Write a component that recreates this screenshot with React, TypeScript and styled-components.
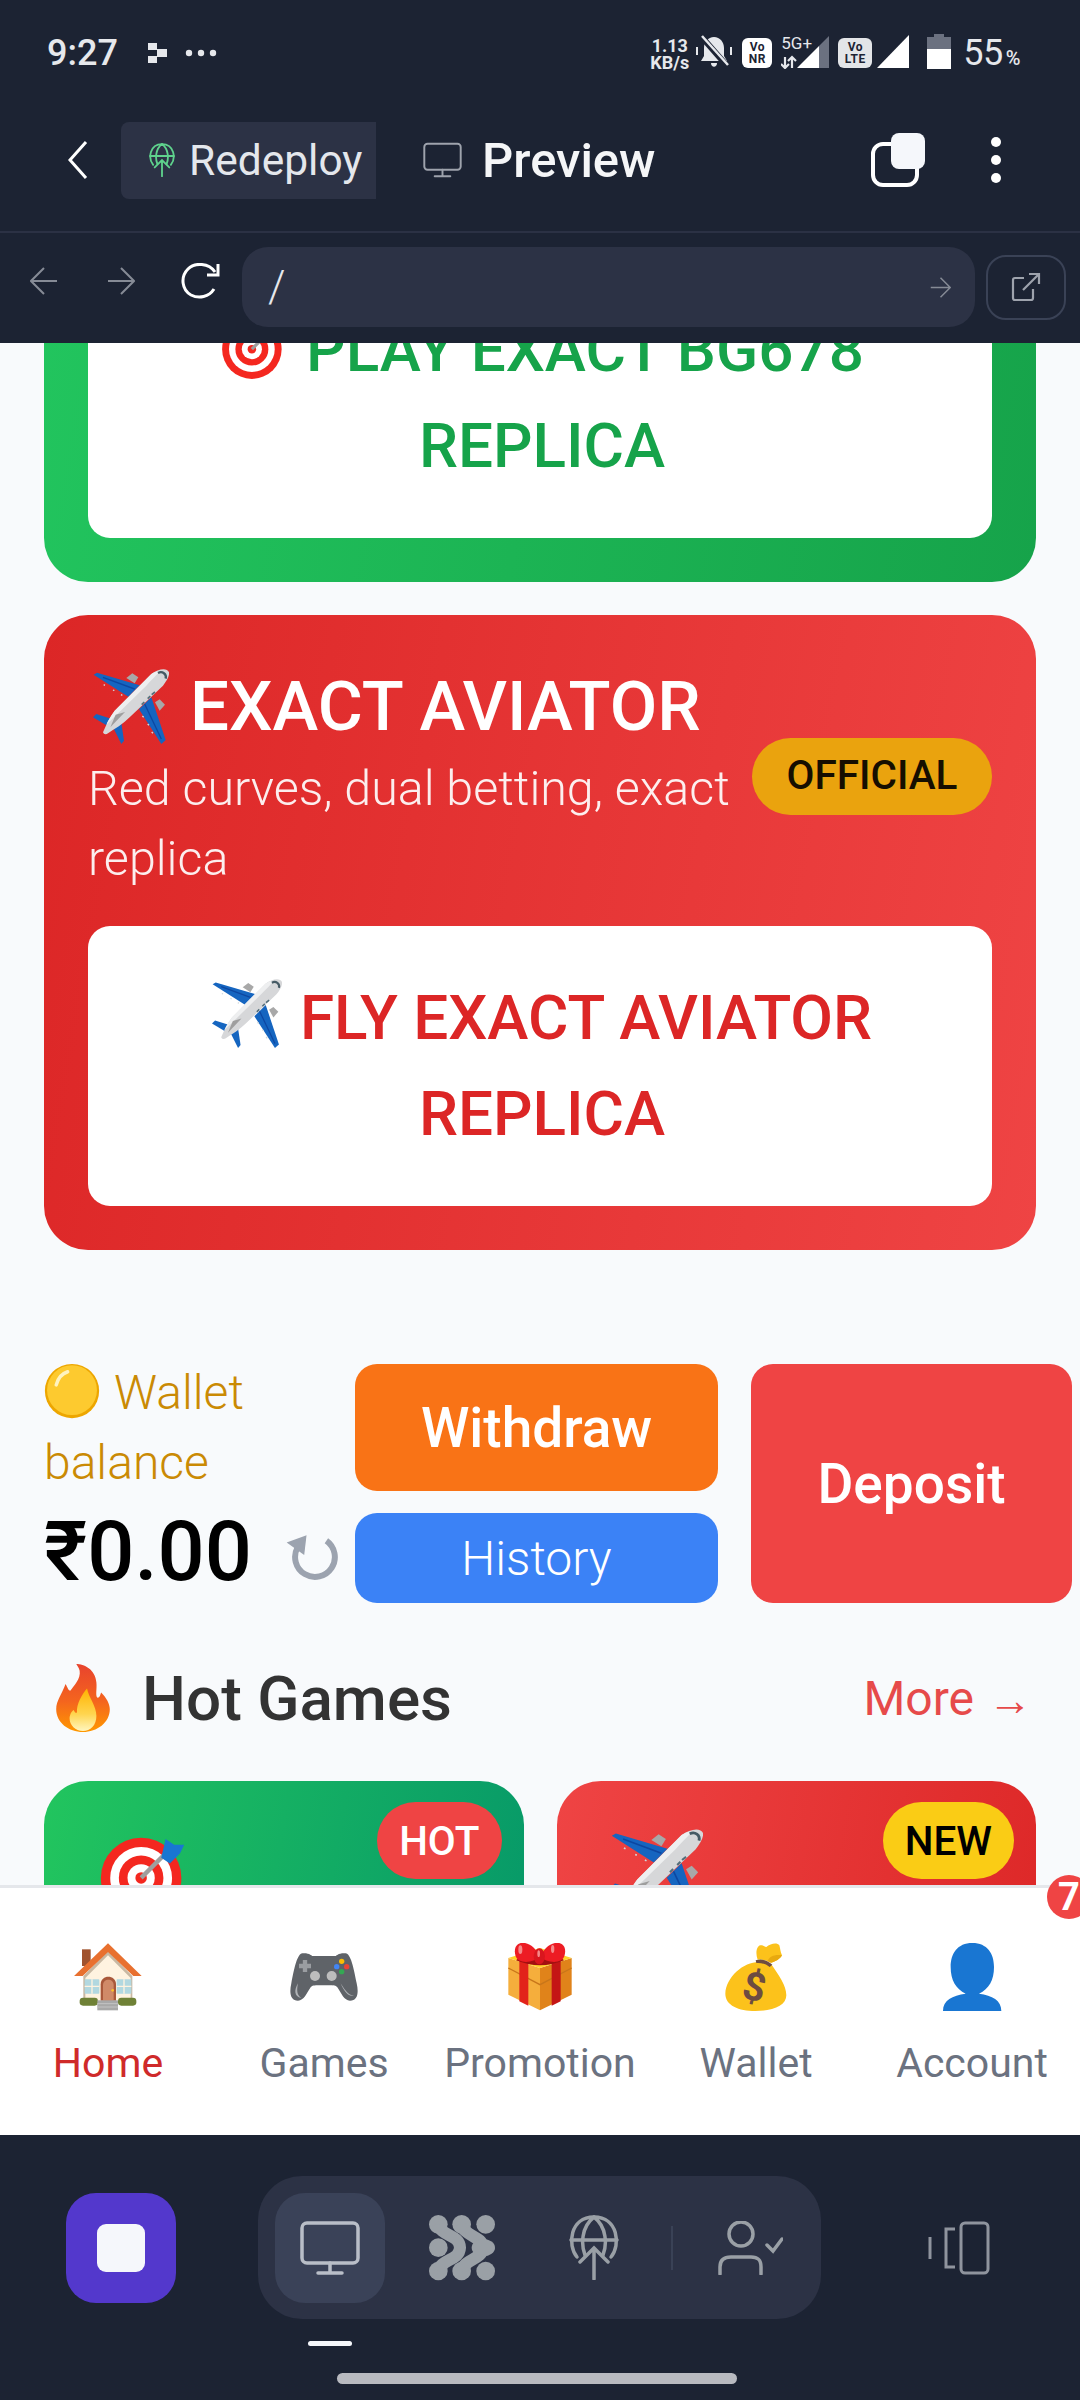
import React from 'react';
import styled, { createGlobalStyle } from 'styled-components';

const GlobalStyle = createGlobalStyle`
  html, body {
    margin: 0;
    padding: 0;
    background: #1c2333;
  }
  * {
    box-sizing: border-box;
  }
`;

const Screen = styled.div`
  width: 1080px;
  height: 2400px;
  display: flex;
  flex-direction: column;
  overflow: hidden;
  background: #1c2333;
  font-family: Roboto, 'Liberation Sans', sans-serif;
`;

/* status bar */
const StatusBar = styled.div`
  height: 110px;
  flex-shrink: 0;
  display: flex;
  align-items: flex-start;
  padding: 34px 60px 0 47px;
  color: #e6e8ec;
`;

const Time = styled.span`
  font-size: 36px;
  line-height: 38px;
  font-weight: 500;
  width: 99px;
`;

const NotifyIcon = styled.svg`
  margin-top: 7px;
`;

const MoreDots = styled.svg`
  margin: 14px 0 0 15px;
`;

const StatusGroup = styled.div`
  margin-left: auto;
  display: flex;
  align-items: flex-start;
`;

const NetSpeed = styled.div`
  width: 51px;
  display: flex;
  flex-direction: column;
  align-items: center;
  font-size: 18px;
  line-height: 17px;
  font-weight: 700;
  margin-top: 3px;
`;

const VoBox = styled.div<{ $w: number; $dim?: boolean; $gap?: number }>`
  width: ${(p) => p.$w}px;
  height: 30px;
  margin: 4px 0 0 ${(p) => p.$gap ?? 0}px;
  border-radius: 6px;
  background: ${(p) => (p.$dim ? '#e3e5e8' : '#ffffff')};
  color: #1c2333;
  display: flex;
  flex-direction: column;
  align-items: center;
  justify-content: center;
  font-size: 12px;
  line-height: 12px;
  font-weight: 700;
  letter-spacing: 0.5px;
`;

const FiveG = styled.div`
  position: relative;
  width: 48px;
  height: 34px;
  margin: 1px 9px 0 9px;
`;

const FiveGText = styled.span`
  position: absolute;
  left: 0;
  top: -1px;
  font-size: 17px;
  line-height: 18px;
  color: #e6e8ec;
`;

const SignalShape = styled.svg`
  width: 32px;
  height: 33px;
  margin: 1px 0 0 5px;
`;

const Battery = styled.svg`
  width: 24px;
  height: 35px;
  margin: 0 12px 0 18px;
`;

const Percent = styled.span`
  font-size: 36px;
  line-height: 38px;
  letter-spacing: -0.5px;
  small {
    font-size: 20px;
    font-weight: 500;
    margin-left: 3px;
  }
`;

/* header */
const Header = styled.div`
  height: 123px;
  flex-shrink: 0;
  display: flex;
  align-items: center;
  padding: 0 0 21px 68px;
  border-bottom: 2px solid #2b3144;
`;

const BackButton = styled.svg`
  width: 20px;
  height: 38px;
  margin-right: 33px;
`;

const ActiveTab = styled.div`
  width: 255px;
  height: 77px;
  padding-left: 28px;
  display: flex;
  align-items: center;
  gap: 14px;
  background: #2c3245;
  border-radius: 8px 0 0 8px;
  color: #e4e7ec;
  font-size: 42.5px;
`;

const PlainTab = styled.div`
  display: flex;
  align-items: center;
  gap: 20px;
  margin-left: 47px;
  color: #f5f6f8;
  font-size: 49px;
  font-weight: 500;
`;

const HeaderActions = styled.div`
  margin-left: auto;
  display: flex;
  align-items: center;
  gap: 65px;
  padding-right: 78px;
`;

/* address bar */
const UrlBar = styled.div`
  height: 110px;
  flex-shrink: 0;
  display: flex;
  align-items: center;
  padding: 0 14px 2px 30px;
`;

const NavIcons = styled.div`
  width: 212px;
  display: flex;
  align-items: center;
  gap: 49px;
  flex-shrink: 0;
  margin-top: -12px;
`;

const ReloadIcon = styled.svg`
  margin-left: -3px;
`;

const UrlField = styled.div`
  width: 733px;
  height: 80px;
  border-radius: 26px;
  background: #2c3245;
  display: flex;
  align-items: center;
  justify-content: space-between;
  padding: 0 24px 0 26px;
  color: #e6e8ec;
  font-size: 44px;
  font-weight: 300;
`;

const OpenButton = styled.div`
  width: 80px;
  height: 65px;
  margin-left: 11px;
  border: 2px solid #3a4256;
  border-radius: 20px;
  display: flex;
  align-items: center;
  justify-content: center;
`;

/* scrolled page */
const Viewport = styled.div`
  flex: 1;
  min-height: 0;
  overflow: hidden;
  background: #f8fafc;
`;

const Content = styled.div`
  margin-top: -129px;
  padding: 0 44px;
`;

const PromoCard = styled.div<{ $from: string; $to: string }>`
  padding: 44px;
  margin-bottom: 33px;
  border-radius: 44px;
  background: linear-gradient(100deg, ${(p) => p.$from}, ${(p) => p.$to});
`;

const PromoHead = styled.div`
  display: flex;
  align-items: center;
  justify-content: space-between;
  margin-bottom: 32px;
  color: #ffffff;
`;

const PromoTitle = styled.div`
  display: flex;
  align-items: center;
  gap: 21px;
  padding-left: 5px;
  font-size: 69px;
  line-height: 95px;
  font-weight: 500;
`;

const PromoText = styled.div`
  width: 650px;
  font-size: 48.4px;
  line-height: 70px;
  font-weight: 300;
  opacity: 0.92;
`;

const Pill = styled.div`
  height: 77px;
  width: 240px;
  flex-shrink: 0;
  padding-bottom: 4px;
  border-radius: 39px;
  background: #eaa30e;
  color: #160e00;
  display: flex;
  align-items: center;
  justify-content: center;
  font-size: 40.5px;
  font-weight: 500;
`;

const PlayButton = styled.div<{ $color: string }>`
  height: 280px;
  padding: 44px 60px 44px 64px;
  border-radius: 22px;
  background: #ffffff;
  color: ${(p) => p.$color};
  text-align: center;
  font-size: 62px;
  line-height: 96px;
  font-weight: 500;
  svg {
    vertical-align: -10px;
    margin-right: 18px;
  }
`;

const WalletRow = styled.div`
  display: flex;
  height: 239px;
  margin-top: 114px;
  width: 1028px;
`;

const WalletInfo = styled.div`
  width: 311px;
  flex-shrink: 0;
  margin-top: -6px;
`;

const WalletLabel = styled.div`
  font-size: 48px;
  line-height: 70px;
  font-weight: 300;
  color: #ca8a04;
  svg {
    vertical-align: -10px;
    margin-right: 14px;
  }
`;

const AmountRow = styled.div`
  display: flex;
  align-items: center;
  height: 112px;
  margin-top: -3px;
`;

const Amount = styled.span`
  font-size: 83px;
  font-weight: 500;
  color: #000000;
`;

const RefreshIcon = styled.svg`
  flex-shrink: 0;
  width: 53px;
  height: 50px;
  margin: 16px 0 0 33px;
`;

const WalletStack = styled.div`
  width: 363px;
  flex-shrink: 0;
  display: flex;
  flex-direction: column;
  gap: 22px;
`;

const WalletButton = styled.div<{ $bg: string; $grow?: boolean; $light?: boolean }>`
  flex: ${(p) => (p.$grow ? '1' : 'none')};
  height: ${(p) => (p.$grow ? 'auto' : '90px')};
  border-radius: 22px;
  background: ${(p) => p.$bg};
  color: #ffffff;
  display: flex;
  align-items: center;
  justify-content: center;
  font-size: ${(p) => (p.$light ? '48px' : '55px')};
  font-weight: ${(p) => (p.$light ? 300 : 500)};
`;

const DepositCol = styled.div`
  width: 321px;
  flex-shrink: 0;
  margin-left: 33px;
  display: flex;
`;

const SectionHead = styled.div`
  height: 70px;
  margin: 60px 0 48px;
  display: flex;
  align-items: center;
  justify-content: space-between;
`;

const SectionTitle = styled.div`
  display: flex;
  align-items: center;
  padding-left: 12px;
  gap: 32px;
  color: #333333;
  font-size: 62px;
  font-weight: 500;
`;

const MoreLink = styled.div`
  padding-right: 4px;
  color: #e64a4a;
  font-size: 48px;
  span {
    margin-left: 14px;
    font-size: 44px;
  }
`;

const GameGrid = styled.div`
  display: grid;
  grid-template-columns: 1fr 1fr;
  gap: 33px;
`;

const GameCard = styled.div<{ $from: string; $to: string }>`
  position: relative;
  height: 400px;
  padding: 48px 54px;
  border-radius: 44px;
  background: linear-gradient(100deg, ${(p) => p.$from}, ${(p) => p.$to});
`;

const GameBadge = styled.div<{ $bg: string; $fg: string }>`
  position: absolute;
  top: 21px;
  right: 22px;
  height: 77px;
  padding: 0 22px;
  border-radius: 39px;
  background: ${(p) => p.$bg};
  color: ${(p) => p.$fg};
  display: flex;
  align-items: center;
  font-size: 40.5px;
  font-weight: 500;
`;

/* bottom tabs */
const TabBar = styled.div`
  position: relative;
  height: 250px;
  flex-shrink: 0;
  display: flex;
  padding-top: 55px;
  background: #ffffff;
  border-top: 3px solid #e5e7eb;
`;

const TabItem = styled.div<{ $active?: boolean }>`
  flex: 1;
  display: flex;
  flex-direction: column;
  align-items: center;
  gap: 28px;
  color: ${(p) => (p.$active ? '#cf2a2a' : '#6b7280')};
  font-size: 41px;
  line-height: 48px;
`;

const NoticeBadge = styled.div`
  position: absolute;
  top: -13px;
  left: 1047px;
  width: 44px;
  height: 44px;
  border-radius: 50%;
  background: #ef4444;
  color: #ffffff;
  display: flex;
  align-items: center;
  justify-content: center;
  font-size: 38px;
  font-weight: 700;
`;

/* editor dock */
const Dock = styled.div`
  height: 265px;
  flex-shrink: 0;
  display: flex;
  flex-direction: column;
`;

const DockRow = styled.div`
  display: flex;
  align-items: center;
  height: 143px;
  margin-top: 41px;
  padding-left: 66px;
`;

const StopButton = styled.div`
  width: 110px;
  height: 110px;
  border-radius: 30px;
  background: #5338cc;
  display: flex;
  align-items: center;
  justify-content: center;
  span {
    width: 48px;
    height: 48px;
    border-radius: 9px;
    background: #f5f7fb;
  }
`;

const DockPill = styled.div`
  width: 563px;
  height: 143px;
  margin-left: 82px;
  padding: 0 0 0 17px;
  border-radius: 44px;
  background: #2c3245;
  display: flex;
  align-items: center;
`;

const DockTile = styled.div<{ $active?: boolean; $w?: number }>`
  width: ${(p) => p.$w ?? 110}px;
  height: 110px;
  flex-shrink: 0;
  border-radius: 30px;
  background: ${(p) => (p.$active ? '#3a4258' : 'transparent')};
  display: flex;
  align-items: center;
  justify-content: center;
`;

const DockDivider = styled.div`
  width: 2px;
  height: 44px;
  margin: 0 22px;
  background: #3a4256;
`;

const PanelIcon = styled.svg`
  width: 62px;
  height: 54px;
  margin-left: 107px;
`;

const TabIndicator = styled.div`
  width: 44px;
  height: 5px;
  margin: 22px 0 0 308px;
  border-radius: 3px;
  background: #f5f7fb;
`;

const HomeBar = styled.div`
  width: 400px;
  height: 11px;
  margin: 27px 0 0 337px;
  border-radius: 6px;
  background: #b8bac0;
`;

/* emoji drawings */
const Plane = ({ size }: { size: number }) => (
  <svg width={size} height={size} viewBox="40 25 228 228">
    <path d="M42 42 L52 36 L180 74 L146 108Z" fill="#1565c0" />
    <path d="M70 50 L165 85" stroke="#0d47a1" strokeWidth="4" />
    <path d="M178 146 L215 110 L258 238 L245 250Z" fill="#1565c0" />
    <path d="M195 130 L245 235" stroke="#0d47a1" strokeWidth="4" />
    <path d="M40 170 L50 160 L125 184 L100 206Z" fill="#1565c0" />
    <path d="M100 200 L125 186 L133 240 L125 250Z" fill="#1565c0" />
    <path d="M140 52 L158 38 L176 50 L165 68Z" fill="#a8a8a8" />
    <path d="M226 125 L240 116 L256 132 L240 150Z" fill="#a8a8a8" />
    <path d="M268 35 C262 20 235 25 215 40 L105 150 C90 170 78 195 70 215 C72 222 80 222 85 218 C105 205 130 190 150 170 L250 75 C262 60 270 45 268 35Z" fill="#d6d7d9" />
    <path d="M215 40 L105 150 C92 168 84 182 80 192 L200 75 C215 58 230 45 240 32 C232 30 222 35 215 40Z" fill="#eeeff0" />
    <path d="M108 162 L136 154 L92 200Z" fill="#9e9e9e" />
    <path d="M235 37 C248 30 262 40 258 54" stroke="#455a64" strokeWidth="7" fill="none" />
    <path d="M186 132 L194 124 M204 114 L212 106 M216 102 L226 94" stroke="#546e7a" strokeWidth="5" />
    <path d="M72 72 L76 74 M100 88 L104 90 M124 102 L128 104 M188 166 L192 170 M204 190 L208 194 M216 214 L220 218" stroke="#cfd8dc" strokeWidth="4" />
  </svg>
);

const Target = ({ size }: { size: number }) => (
  <svg width={size} height={size} viewBox="0 0 128 128">
    <circle cx="60" cy="68" r="56" fill="#f4271f" />
    <circle cx="60" cy="68" r="43" fill="#ffffff" />
    <circle cx="60" cy="68" r="31" fill="#f4271f" />
    <circle cx="60" cy="68" r="19" fill="#ffffff" />
    <circle cx="60" cy="68" r="8" fill="#f4271f" />
    <path d="M60 68 L92 36" stroke="#9e9e9e" strokeWidth="6" />
    <path d="M88 40 L94 14 L106 22 L120 22 L114 34 L100 48Z" fill="#1976d2" />
  </svg>
);

const Coin = ({ size }: { size: number }) => (
  <svg width={size} height={size} viewBox="0 0 128 128">
    <circle cx="64" cy="64" r="62" fill="#eda600" />
    <circle cx="64" cy="62" r="57" fill="#fdca2f" />
    <path d="M28 50 C32 34 42 24 54 20" stroke="#fff3c0" strokeWidth="8" strokeLinecap="round" fill="none" />
  </svg>
);

const Fire = () => (
  <svg width="54" height="68" viewBox="48 15 160 203">
    <defs>
      <linearGradient id="flameOuter" x1="0" y1="0" x2="0" y2="1">
        <stop offset="0" stopColor="#e8432e" />
        <stop offset="0.55" stopColor="#f4651e" />
        <stop offset="1" stopColor="#ff9800" />
      </linearGradient>
      <linearGradient id="flameInner" x1="0" y1="0" x2="0" y2="1">
        <stop offset="0" stopColor="#ffb300" />
        <stop offset="0.6" stopColor="#ffd54f" />
        <stop offset="1" stopColor="#fff6bf" />
      </linearGradient>
    </defs>
    <path d="M108 15 C130 15 165 30 168 70 C170 90 165 105 170 115 C178 118 180 105 182 100 C198 115 208 135 208 150 C208 190 170 218 128 218 C85 218 48 190 48 150 C48 125 65 105 76 75 C82 85 84 95 90 95 C100 80 122 60 118 35 C116 25 110 20 108 15Z" fill="url(#flameOuter)" />
    <path d="M140 88 C145 115 168 140 168 170 C168 198 150 215 128 215 C105 215 88 198 88 178 C88 165 95 155 100 152 C104 160 106 162 110 160 C108 135 125 105 140 88Z" fill="url(#flameInner)" />
  </svg>
);

const House = ({ size }: { size: number }) => (
  <svg width={size} height={size} viewBox="40 41 204 204">
    <rect x="64" y="60" width="26" height="50" fill="#a0522d" />
    <path d="M142 65 L68 140 V215 H215 V140Z" fill="#c8b8a2" />
    <path d="M142 78 L74 146 V215 H210 V146Z" fill="#fff3e0" />
    <path d="M142 42 L40 140 H66 L142 68 L218 140 H243Z" fill="#e8702f" />
    <rect x="72" y="150" width="44" height="43" rx="2" fill="#b2d8e0" />
    <rect x="168" y="150" width="44" height="43" rx="2" fill="#b2d8e0" />
    <path d="M94 150 V193 M72 171 H116 M190 150 V193 M168 171 H212" stroke="#fff3e0" strokeWidth="4" />
    <path d="M120 214 V165 C120 135 166 135 166 165 V214Z" fill="#a9583a" />
    <path d="M127 214 V168 C127 146 159 146 159 168 V214Z" fill="#d08a68" />
    <circle cx="156" cy="183" r="4" fill="#fbc02d" />
    <rect x="57" y="205" width="55" height="24" rx="10" fill="#6f8136" />
    <rect x="172" y="205" width="55" height="24" rx="10" fill="#6f8136" />
    <rect x="110" y="213" width="62" height="30" fill="#a8a8a8" />
    <path d="M110 223 H172 M110 233 H172" stroke="#c4c4c4" strokeWidth="3" />
  </svg>
);

const Gamepad = ({ size }: { size: number }) => (
  <svg width={size} height={size} viewBox="688 39 204 204">
    <path d="M725 70 C745 68 755 78 755 78 L825 78 C825 78 835 68 855 70 C870 72 878 110 888 160 C895 190 890 212 868 212 C850 212 842 190 830 172 C825 165 815 166 790 166 C765 166 755 165 750 172 C738 190 730 212 712 212 C690 212 685 190 692 160 C702 110 710 72 725 70Z" fill="#5f6368" />
    <path d="M715 108 H751 M733 90 V126" stroke="#9a9da1" strokeWidth="13" />
    <circle cx="763" cy="138" r="15" fill="#bdbdbd" />
    <circle cx="813" cy="138" r="15" fill="#bdbdbd" />
    <circle cx="843" cy="94" r="8" fill="#fbbc04" />
    <circle cx="858" cy="110" r="8" fill="#ea4335" />
    <circle cx="828" cy="110" r="8" fill="#4285f4" />
    <circle cx="843" cy="125" r="8" fill="#34a853" />
    <path d="M712 160 C700 180 700 200 722 204 C708 195 708 180 712 160Z" fill="#b0b3b6" />
    <path d="M840 160 C850 175 860 195 880 198 C866 200 852 190 840 160Z" fill="#b0b3b6" />
  </svg>
);

const Gift = ({ size }: { size: number }) => (
  <svg width={size} height={size} viewBox="1338 40 204 204">
    <path d="M1345 85 L1440 115 V242 L1345 195Z" fill="#f5ae3c" />
    <path d="M1440 115 L1535 85 V195 L1440 242Z" fill="#e0831a" />
    <path d="M1345 85 L1440 55 L1535 85 L1440 115Z" fill="#ffd22b" />
    <path d="M1345 115 L1440 165 L1535 115" stroke="#c8761a" strokeWidth="4" fill="none" />
    <path d="M1378 90 L1405 100 V228 L1378 215Z" fill="#e2231a" />
    <path d="M1475 100 L1502 90 V215 L1475 228Z" fill="#c41515" />
    <path d="M1368 92 Q1440 122 1512 92 L1500 82 H1380Z" fill="#a31010" />
    <path d="M1440 82 C1420 100 1375 104 1367 80 C1358 50 1375 36 1395 40 C1415 44 1430 60 1440 82Z" fill="#ed1c24" />
    <path d="M1440 82 C1460 100 1505 104 1513 80 C1522 50 1505 36 1485 40 C1465 44 1450 60 1440 82Z" fill="#ed1c24" />
    <ellipse cx="1438" cy="80" rx="17" ry="24" fill="#d9161e" />
    <ellipse cx="1381" cy="60" rx="6" ry="13" fill="#f58a8a" />
    <ellipse cx="1436" cy="72" rx="4" ry="10" fill="#f58a8a" />
    <ellipse cx="1478" cy="58" rx="5" ry="12" fill="#f58a8a" />
  </svg>
);

const MoneyBag = ({ size }: { size: number }) => (
  <svg width={size} height={size} viewBox="125 38 204 204">
    <path d="M232 88 C225 70 228 48 240 45 C250 44 252 50 258 50 C270 40 290 35 297 45 C300 55 300 65 305 75 C300 85 285 95 272 97 C258 90 245 86 232 88Z" fill="#fcc21b" />
    <path d="M262 92 C268 78 282 72 305 75 C300 85 285 95 272 97Z" fill="#e8a90f" />
    <path d="M235 95 C190 95 137 140 135 190 C135 225 175 242 225 242 C280 242 318 225 318 195 C318 165 295 135 275 105 C262 95 245 95 235 95Z" fill="#fcc21b" />
    <path d="M226 90 Q252 82 276 103 L268 110 Q250 96 228 98Z" fill="#6d4c41" />
    <text x="222" y="210" textAnchor="middle" fontSize="118" fontWeight="700" fontFamily="Roboto, sans-serif" fill="#6d4c41" transform="rotate(12 222 170)">$</text>
  </svg>
);

const Person = ({ size }: { size: number }) => (
  <svg width={size} height={size} viewBox="772 38 204 204">
    <path d="M875 38 C920 38 940 70 940 110 C940 150 925 175 895 190 C935 195 962 210 962 242 H787 C787 210 815 195 855 190 C825 175 810 150 810 110 C810 70 830 38 875 38Z" fill="#1976d2" />
  </svg>
);

/* status and toolbar drawings */
const Bell = () => (
  <svg width="38" height="36" viewBox="0 0 38 36">
    <path d="M19 3 C13 3 9 8 9 14 V22 L6 27 H32 L29 22 V14 C29 8 25 3 19 3Z" fill="#e6e8ec" />
    <path d="M16 29 H22 C22 34 16 34 16 29Z" fill="#e6e8ec" />
    <path d="M5 1 L33 33" stroke="#1c2333" strokeWidth="6" />
    <path d="M7 2 L33 31" stroke="#e6e8ec" strokeWidth="2.5" />
    <path d="M2 13 V21 M36 13 V21" stroke="#e6e8ec" strokeWidth="2" />
  </svg>
);

const GlobeUp = ({ size, color, w }: { size: number; color: string; w: number }) => (
  <svg width={size} height={size * 1.3} viewBox="0 0 50 65" fill="none" stroke={color} strokeWidth={w} strokeLinecap="round">
    <path d="M8 42 C-2 30 1 2 25 2 C49 2 52 30 42 42" />
    <path d="M25 2 C12 12 12 30 16 40 M25 2 C38 12 38 30 34 40 M2 25 H48" />
    <path d="M25 64 V33 M11 47 L25 33 L39 47" />
  </svg>
);

const Monitor = ({ w, h, color, sw }: { w: number; h: number; color: string; sw: number }) => (
  <svg width={w} height={h} viewBox="0 0 60 54" fill="none" stroke={color} strokeWidth={sw} strokeLinecap="round">
    <rect x="2" y="2" width="56" height="40" rx="5" />
    <path d="M30 42 V51 M18 52 H42" />
  </svg>
);

const ArrowSvg = styled.svg<{ $flip?: boolean }>`
  transform: ${(p) => (p.$flip ? 'scaleX(-1)' : 'none')};
`;

const Arrow = ({ size, color, flip }: { size: number; color: string; flip?: boolean }) => (
  <ArrowSvg $flip={flip} width={size} height={size} viewBox="0 0 28 28" fill="none" stroke={color} strokeWidth="2">
    <path d="M27 14 H2 M14 1 L1 14 L14 27" />
  </ArrowSvg>
);

const BlobIcon = () => (
  <svg width="66" height="66" viewBox="27 27 198 198" fill="#9aa0a6">
    <circle cx="55" cy="55" r="28" />
    <circle cx="125" cy="55" r="28" />
    <circle cx="197" cy="55" r="28" />
    <circle cx="55" cy="125" r="28" />
    <circle cx="55" cy="195" r="28" />
    <circle cx="125" cy="195" r="28" />
    <circle cx="197" cy="195" r="28" />
    <path d="M55 55 C62 92 118 84 120 125 C118 166 62 158 55 195" fill="none" stroke="#9aa0a6" strokeWidth="36" />
    <path d="M125 55 C132 92 186 88 190 125 C186 162 132 158 125 195" fill="none" stroke="#9aa0a6" strokeWidth="36" />
    <ellipse cx="190" cy="125" rx="35" ry="26" />
  </svg>
);

const App: React.FC = () => (
  <Screen>
    <GlobalStyle />
    <StatusBar>
      <Time>9:27</Time>
      <NotifyIcon width="24" height="24" viewBox="0 0 24 24" fill="#e6e8ec">
        <rect x="2" y="2" width="9" height="7" />
        <rect x="11" y="8" width="10" height="8" />
        <rect x="2" y="15" width="9" height="7" />
      </NotifyIcon>
      <MoreDots width="36" height="10" viewBox="0 0 36 10" fill="#e6e8ec">
        <circle cx="4" cy="5" r="3.2" />
        <circle cx="16" cy="5" r="3.2" />
        <circle cx="28" cy="5" r="3.2" />
      </MoreDots>
      <StatusGroup>
        <NetSpeed>
          <span>1.13</span>
          <span>KB/s</span>
        </NetSpeed>
        <Bell />
        <VoBox $w={30} $gap={9}>
          <span>Vo</span>
          <span>NR</span>
        </VoBox>
        <FiveG>
          <FiveGText>5G+</FiveGText>
          <svg width="48" height="34" viewBox="0 0 48 34">
            <path d="M16 33 L38 11 V33Z" fill="#ffffff" />
            <path d="M38 11 L48 1 V33 H38Z" fill="#6b7180" />
            <path d="M4 22 V33 M0 29 L4 33 L8 29 M11 33 V22 M7 26 L11 22 L15 26" stroke="#e6e8ec" strokeWidth="2.2" fill="none" />
          </svg>
        </FiveG>
        <VoBox $w={34} $dim>
          <span>Vo</span>
          <span>LTE</span>
        </VoBox>
        <SignalShape viewBox="0 0 32 33">
          <path d="M0 33 L32 0 V33Z" fill="#ffffff" />
        </SignalShape>
        <Battery viewBox="0 0 24 35">
          <path d="M7 0 H17 V3 H24 V15 H0 V3 H7Z" fill="#6b7180" />
          <rect x="0" y="15" width="24" height="20" fill="#ffffff" />
        </Battery>
        <Percent>
          55<small>%</small>
        </Percent>
      </StatusGroup>
    </StatusBar>

    <Header>
      <BackButton viewBox="0 0 20 38" fill="none" stroke="#ffffff" strokeWidth="3">
        <path d="M18 1 L2 19 L18 37" />
      </BackButton>
      <ActiveTab>
        <GlobeUp size={26} color="#5fd38d" w={3.5} />
        Redeploy
      </ActiveTab>
      <PlainTab>
        <Monitor w={39} h={36} color="#9ea3ad" sw={3} />
        Preview
      </PlainTab>
      <HeaderActions>
        <svg width="54" height="54" viewBox="0 0 54 54">
          <rect x="2" y="11" width="44" height="41" rx="10" fill="none" stroke="#ffffff" strokeWidth="4" />
          <rect x="20" y="0" width="34" height="36" rx="8" fill="#f5f7fb" />
        </svg>
        <svg width="12" height="48" viewBox="0 0 12 48" fill="#ffffff">
          <circle cx="6" cy="6" r="5" />
          <circle cx="6" cy="24" r="5" />
          <circle cx="6" cy="42" r="5" />
        </svg>
      </HeaderActions>
    </Header>

    <UrlBar>
      <NavIcons>
        <Arrow size={28} color="#868b96" />
        <Arrow size={28} color="#868b96" flip />
        <ReloadIcon width="40" height="36" viewBox="0 0 40 36" fill="none" stroke="#ffffff" strokeWidth="3">
          <path d="M34 9 C28 0 14 -1 7 6 C-1 14 1 27 10 32 C18 36 28 34 33 26" />
          <path d="M37 1 V12 H26" />
        </ReloadIcon>
      </NavIcons>
      <UrlField>
        <span>/</span>
        <Arrow size={21} color="#868b96" flip />
      </UrlField>
      <OpenButton>
        <svg width="30" height="30" viewBox="0 0 30 30" fill="none" stroke="#9ea3ad" strokeWidth="2.2">
          <path d="M13 6 H4 Q2 6 2 8 V26 Q2 28 4 28 H20 Q22 28 22 26 V17" />
          <path d="M12 18 L28 2 M18 2 H28 V12" />
        </svg>
      </OpenButton>
    </UrlBar>

    <Viewport>
      <Content>
        <PromoCard $from="#22c55e" $to="#16a34a">
          <PlayButton $color="#16a34a">
            <Target size={68} />
            PLAY EXACT BG678 REPLICA
          </PlayButton>
        </PromoCard>

        <PromoCard $from="#dc2626" $to="#ef4444">
          <PromoHead>
            <div>
              <PromoTitle>
                <Plane size={76} />
                EXACT AVIATOR
              </PromoTitle>
              <PromoText>Red curves, dual betting, exact replica</PromoText>
            </div>
            <Pill>OFFICIAL</Pill>
          </PromoHead>
          <PlayButton $color="#dc2626">
            <Plane size={70} />
            FLY EXACT AVIATOR REPLICA
          </PlayButton>
        </PromoCard>

        <WalletRow>
          <WalletInfo>
            <WalletLabel>
              <Coin size={56} />
              Wallet balance
            </WalletLabel>
            <AmountRow>
              <Amount>₹0.00</Amount>
              <RefreshIcon viewBox="50 45 160 150" fill="none">
                <path d="M175 65 A60 60 0 1 1 88 85" stroke="#9ca3af" strokeWidth="18" />
                <path d="M55 70 L115 48 L108 108Z" fill="#9ca3af" />
              </RefreshIcon>
            </AmountRow>
          </WalletInfo>
          <WalletStack>
            <WalletButton $bg="#f97316" $grow>Withdraw</WalletButton>
            <WalletButton $bg="#3b82f6" $light>History</WalletButton>
          </WalletStack>
          <DepositCol>
            <WalletButton $bg="#ef4444" $grow>Deposit</WalletButton>
          </DepositCol>
        </WalletRow>

        <SectionHead>
          <SectionTitle>
            <Fire />
            Hot Games
          </SectionTitle>
          <MoreLink>
            More<span>→</span>
          </MoreLink>
        </SectionHead>

        <GameGrid>
          <GameCard $from="#22c55e" $to="#059669">
            <Target size={92} />
            <GameBadge $bg="#ef4444" $fg="#ffffff">HOT</GameBadge>
          </GameCard>
          <GameCard $from="#ef4444" $to="#dc2626">
            <Plane size={92} />
            <GameBadge $bg="#facc15" $fg="#000000">NEW</GameBadge>
          </GameCard>
        </GameGrid>
      </Content>
    </Viewport>

    <TabBar>
      <TabItem $active>
        <House size={68} />
        Home
      </TabItem>
      <TabItem>
        <Gamepad size={68} />
        Games
      </TabItem>
      <TabItem>
        <Gift size={68} />
        Promotion
      </TabItem>
      <TabItem>
        <MoneyBag size={68} />
        Wallet
      </TabItem>
      <TabItem>
        <Person size={68} />
        Account
      </TabItem>
      <NoticeBadge>7</NoticeBadge>
    </TabBar>

    <Dock>
      <DockRow>
        <StopButton>
          <span />
        </StopButton>
        <DockPill>
          <DockTile $active>
            <Monitor w={60} h={54} color="#b9bec8" sw={3.5} />
          </DockTile>
          <DockTile $w={154}>
            <BlobIcon />
          </DockTile>
          <DockTile $w={110}>
            <GlobeUp size={50} color="#9aa0a6" w={3.5} />
          </DockTile>
          <DockDivider />
          <DockTile $w={110}>
            <svg width="66" height="54" viewBox="0 0 66 54" fill="none" stroke="#9aa0a6" strokeWidth="3.5" strokeLinecap="round">
              <ellipse cx="24" cy="13" rx="12" ry="12" />
              <path d="M3 53 V46 C3 38 8 36 14 36 H34 C40 36 44 38 44 46 V53" />
              <path d="M50 24 L56 30 L65 18" />
            </svg>
          </DockTile>
        </DockPill>
        <PanelIcon viewBox="0 0 62 54" fill="none" stroke="#8f949e" strokeWidth="3">
          <rect x="33" y="2" width="27" height="50" rx="4" />
          <path d="M27 8 H18 V46 H27" />
          <path d="M2 16 V38" />
        </PanelIcon>
      </DockRow>
      <TabIndicator />
      <HomeBar />
    </Dock>
  </Screen>
);

export default App;
